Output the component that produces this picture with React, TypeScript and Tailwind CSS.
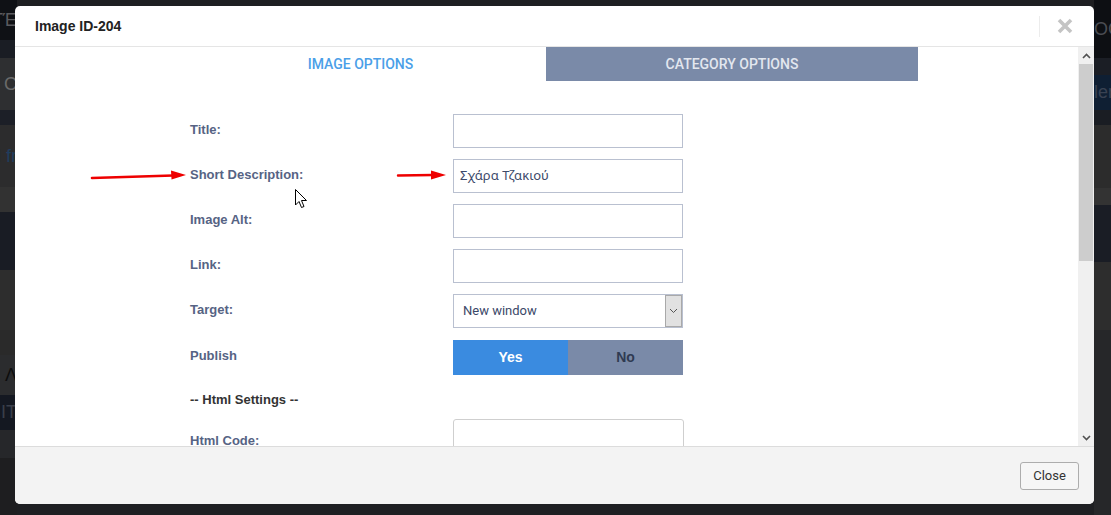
import React from "react";

const leftBands: { h: number; c: string; t?: string; tc?: string }[] = [
  { h: 40, c: "#0f1115", t: "ΤΈ", tc: "#5a5a5e" },
  { h: 18, c: "#1a1d24" },
  { h: 52, c: "#2e2f31", t: "ι C", tc: "#6a6a6a" },
  { h: 15, c: "#1c1f27" },
  { h: 62, c: "#2c2c2d", t: "l fr", tc: "#1f3d5e" },
  { h: 25, c: "#323232" },
  { h: 58, c: "#191c24" },
  { h: 60, c: "#2d2d2d" },
  { h: 25, c: "#2a2a2a" },
  { h: 40, c: "#2b2c2e", t: "Λ", tc: "#0d0d0d" },
  { h: 35, c: "#141821", t: "IT", tc: "#3a3f4a" },
  { h: 28, c: "#26272a" },
  { h: 57, c: "#1e1e20" },
];

const rightBands: { h: number; c: string; t?: string; tc?: string }[] = [
  { h: 58, c: "#0d0f13", t: "OC", tc: "#4a4c52" },
  { h: 17, c: "#1b1e25" },
  { h: 35, c: "#0f1f33", t: "ler", tc: "#394252" },
  { h: 15, c: "#1a1d23" },
  { h: 63, c: "#2c2c2c" },
  { h: 17, c: "#333333" },
  { h: 57, c: "#1a1d25" },
  { h: 68, c: "#2d2d2d" },
  { h: 185, c: "#262729" },
];

function Strip({ bands, align }: { bands: typeof leftBands; align: "left" | "right" }) {
  return (
    <div className="flex w-[17px] flex-col overflow-hidden">
      {bands.map((b, i) => (
        <div
          key={i}
          className={`flex shrink-0 items-center overflow-hidden whitespace-nowrap text-[18px] ${align === "left" ? "justify-start" : "justify-end"}`}
          style={{ height: b.h, backgroundColor: b.c, color: b.tc }}
        >
          {b.t ? <span className="font-['Liberation_Sans',sans-serif]">{b.t}</span> : null}
        </div>
      ))}
    </div>
  );
}

function Field({ label, children, h = 34 }: { label: string; children: React.ReactNode; h?: number }) {
  return (
    <div className="flex items-center">
      <div
        className="flex w-[263px] shrink-0 items-center pb-[3px] text-[13px] font-bold text-[#566384]"
        style={{ height: h }}
      >
        {label}
      </div>
      {children}
    </div>
  );
}

function TextInput({ value }: { value?: string }) {
  return (
    <div className="flex h-[34px] w-[230px] items-center border border-[#b9c0d0] bg-white pl-[6px] font-['Noto_Sans',sans-serif] text-[13px] text-[#3d4a6a]">
      {value}
    </div>
  );
}

export default function App() {
  return (
    <div className="relative h-[515px] w-[1111px] overflow-hidden bg-[#1e1f22] font-['Liberation_Sans',Arial,sans-serif]">
      {/* page behind */}
      <div className="flex h-[515px] w-[1111px] justify-between">
        <Strip bands={leftBands} align="right" />
        <div className="flex-1 bg-[#1e1f22]" />
        <Strip bands={rightBands} align="left" />
      </div>

      {/* modal */}
      <div className="absolute left-[15px] top-[6px] flex h-[498px] w-[1079px] flex-col overflow-hidden rounded-[5px] bg-white">
        {/* header */}
        <div className="flex h-[41px] shrink-0 items-center justify-between border-b border-[#e5e5e5] pl-[20px] pr-[21px]">
          <div className="text-[14px] font-bold text-[#222]">Image ID-204</div>
          <div className="flex items-center">
            <div className="mr-[17px] h-[21px] w-px bg-[#ececec]" />
            <svg width="16" height="16" viewBox="0 0 16 16">
              <path d="M2 2 L14 14 M14 2 L2 14" stroke="#c4c4c4" strokeWidth="3.6" strokeLinecap="butt" />
            </svg>
          </div>
        </div>

        {/* body */}
        <div className="flex h-[399px] shrink-0">
          <div className="flex-1 overflow-hidden">
            <div className="mx-auto w-[743px]">
              {/* tabs */}
              <div className="flex h-[34px] font-['Roboto',sans-serif] text-[14px] font-medium">
                <div className="flex w-[371px] items-center justify-center bg-white text-[#4b9fe8]">IMAGE OPTIONS</div>
                <div className="flex w-[372px] items-center justify-center bg-[#7a8aa8] text-[#e3e7ef]">CATEGORY OPTIONS</div>
              </div>

              {/* form */}
              <div className="ml-[15px] mt-[33px] flex flex-col">
                <div className="flex flex-col gap-[11px]">
                  <Field label="Title:">
                    <TextInput />
                  </Field>
                  <Field label="Short Description:">
                    <TextInput value="Σχάρα Τζακιού" />
                  </Field>
                  <Field label="Image Alt:">
                    <TextInput />
                  </Field>
                  <Field label="Link:">
                    <TextInput />
                  </Field>
                  <Field label="Target:">
                    <div className="flex h-[34px] w-[230px] items-stretch border border-[#b9c0d0] bg-white">
                      <div className="flex flex-1 items-center pl-[9px] font-['Roboto',sans-serif] text-[13px] text-[#3b4868]">
                        New window
                      </div>
                      <div className="flex w-[17px] items-center justify-center border border-[#a9a9a9] bg-[#e1e1e1]">
                        <svg width="9" height="6" viewBox="0 0 9 6">
                          <path d="M1 1 L4.5 4.5 L8 1" fill="none" stroke="#555" strokeWidth="1" />
                        </svg>
                      </div>
                    </div>
                  </Field>
                </div>

                <div className="mt-[12px]">
                  <Field label="Publish" h={35}>
                    <div className="flex h-[35px] w-[230px] text-[14px] font-bold">
                      <div className="flex w-[115px] items-center justify-center bg-[#3a8be0] text-white">Yes</div>
                      <div className="flex w-[115px] items-center justify-center bg-[#7a8aa8] text-[#2f3a52]">No</div>
                    </div>
                  </Field>
                </div>

                <div className="mt-[16px] h-[18px] text-[13px] font-bold leading-[18px] text-[#333]">-- Html Settings --</div>

                <div className="mt-[10px] flex items-start">
                  <div className="w-[263px] shrink-0 pt-[12px] text-[13px] font-bold text-[#566384]">Html Code:</div>
                  <div className="h-[60px] w-[231px] rounded-[3px] border border-[#cfcfcf] bg-white" />
                </div>
              </div>
            </div>
          </div>

          {/* scrollbar */}
          <div className="flex w-[16px] shrink-0 flex-col bg-[#f0f0f0]">
            <div className="flex h-[17px] items-center justify-center">
              <svg width="9" height="6" viewBox="0 0 9 6">
                <path d="M1 5 L4.5 1.5 L8 5" fill="none" stroke="#505050" strokeWidth="1.6" />
              </svg>
            </div>
            <div className="mx-[1px] h-[197px] bg-[#cdcdcd]" />
            <div className="flex-1" />
            <div className="flex h-[17px] items-center justify-center">
              <svg width="9" height="6" viewBox="0 0 9 6">
                <path d="M1 1 L4.5 4.5 L8 1" fill="none" stroke="#505050" strokeWidth="1.6" />
              </svg>
            </div>
          </div>
        </div>

        {/* footer */}
        <div className="flex flex-1 items-center justify-end border-t border-[#dcdcdc] bg-[#f3f3f3] pr-[15px]">
          <div className="flex h-[28px] w-[59px] items-center justify-center rounded-[3px] border border-[#adadad] bg-[#f6f6f6] font-['Roboto',sans-serif] text-[13px] text-[#333]">
            Close
          </div>
        </div>
      </div>

      {/* annotation arrows */}
      <svg className="absolute left-0 top-0" width="1111" height="515" viewBox="0 0 1111 515">
        <path d="M92 178 L173 175.5" stroke="#ee0000" strokeWidth="2.6" strokeLinecap="round" />
        <path d="M186 175 L171 170.5 L171.5 179.5 Z" fill="#ee0000" />
        <path d="M398 175.5 L433 175" stroke="#ee0000" strokeWidth="2.4" strokeLinecap="round" />
        <path d="M446 175 L431 170.5 L431 179.5 Z" fill="#ee0000" />
        {/* mouse cursor */}
        <path
          d="M295.5 189.5 L295.5 205 L299 201.5 L301.5 207.5 L304 206.5 L301.5 200.5 L306.5 200.5 Z"
          fill="#ffffff"
          stroke="#000000"
          strokeWidth="1"
          strokeLinejoin="miter"
        />
      </svg>
    </div>
  );
}
